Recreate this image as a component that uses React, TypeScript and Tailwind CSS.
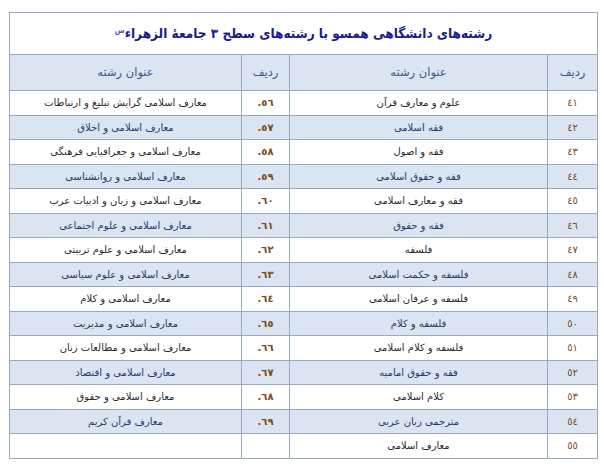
import React from 'react';

const rightRows = [
  ['٤١', 'علوم و معارف قرآن'],
  ['٤٢', 'فقه اسلامی'],
  ['٤٣', 'فقه و اصول'],
  ['٤٤', 'فقه و حقوق اسلامی'],
  ['٤٥', 'فقه و معارف اسلامی'],
  ['٤٦', 'فقه و حقوق'],
  ['٤٧', 'فلسفه'],
  ['٤٨', 'فلسفه و حکمت اسلامی'],
  ['٤٩', 'فلسفه و عرفان اسلامی'],
  ['٥٠', 'فلسفه و کلام'],
  ['٥١', 'فلسفه و کلام اسلامی'],
  ['٥٢', 'فقه و حقوق امامیه'],
  ['٥٣', 'کلام اسلامی'],
  ['٥٤', 'مترجمی زبان عربی'],
  ['٥٥', 'معارف اسلامی'],
];

const leftRows = [
  ['٥٦.', 'معارف اسلامی گرایش تبلیغ و ارتباطات'],
  ['٥٧.', 'معارف اسلامی و اخلاق'],
  ['٥٨.', 'معارف اسلامی و جغرافیایی فرهنگی'],
  ['٥٩.', 'معارف اسلامی و روانشناسی'],
  ['٦٠.', 'معارف اسلامی و زبان و ادبیات عرب'],
  ['٦١.', 'معارف اسلامی و علوم اجتماعی'],
  ['٦٢.', 'معارف اسلامی و علوم تربیتی'],
  ['٦٣.', 'معارف اسلامی و علوم سیاسی'],
  ['٦٤.', 'معارف اسلامی و کلام'],
  ['٦٥.', 'معارف اسلامی و مدیریت'],
  ['٦٦.', 'معارف اسلامی و مطالعات زنان'],
  ['٦٧.', 'معارف اسلامی و اقتصاد'],
  ['٦٨.', 'معارف اسلامی و حقوق'],
  ['٦٩.', 'معارف قرآن کریم'],
  ['', ''],
];

const cell = 'border border-[#98a9c3] text-center align-middle p-0';

export default function App() {
  return (
    <div className="w-[604px] h-[464px] bg-white pt-[12px] pl-[9px]" style={{ fontFamily: '"DejaVu Sans", sans-serif' }}>
      <table dir="rtl" className="border-collapse table-fixed w-[588px]">
        <colgroup>
          <col className="w-[50px]" />
          <col className="w-[258px]" />
          <col className="w-[48px]" />
          <col className="w-[232px]" />
        </colgroup>
        <tbody>
          <tr className="h-[42px]">
            <td colSpan={4} className={cell}>
              <div
                className="text-[13.5px] font-bold text-[#1b1b8e]"
                style={{ fontFamily: '"DejaVu Sans Condensed", "DejaVu Sans", sans-serif' }}
              >
                رشته‌های دانشگاهی همسو با رشته‌های سطح ۳ جامعهٔ الزهراء
                <span className="text-[8px] align-super text-[#5b4fb0]">س</span>
              </div>
            </td>
          </tr>
          <tr className="h-[36px] bg-[#dbe4f1] text-[11.5px] text-[#3b5687]">
            <td className={cell}>ردیف</td>
            <td className={cell}>عنوان رشته</td>
            <td className={cell}>ردیف</td>
            <td className={cell}>عنوان رشته</td>
          </tr>
          {rightRows.map((r, i) => {
            const shaded = i % 2 === 1;
            const l = leftRows[i];
            return (
              <tr key={i} className={`h-[24.5px] text-[10px] ${shaded ? 'bg-[#dbe4f1] text-[#1f3a6b]' : 'bg-white text-[#2b2b2b]'}`}>
                <td className={`${cell} text-[#7a4c1c]`}>{r[0]}</td>
                <td className={cell}>{r[1]}</td>
                <td className={`${cell} text-[#7a4c1c] font-bold`}>{l[0]}</td>
                <td className={cell}>{l[1]}</td>
              </tr>
            );
          })}
        </tbody>
      </table>
    </div>
  );
}
